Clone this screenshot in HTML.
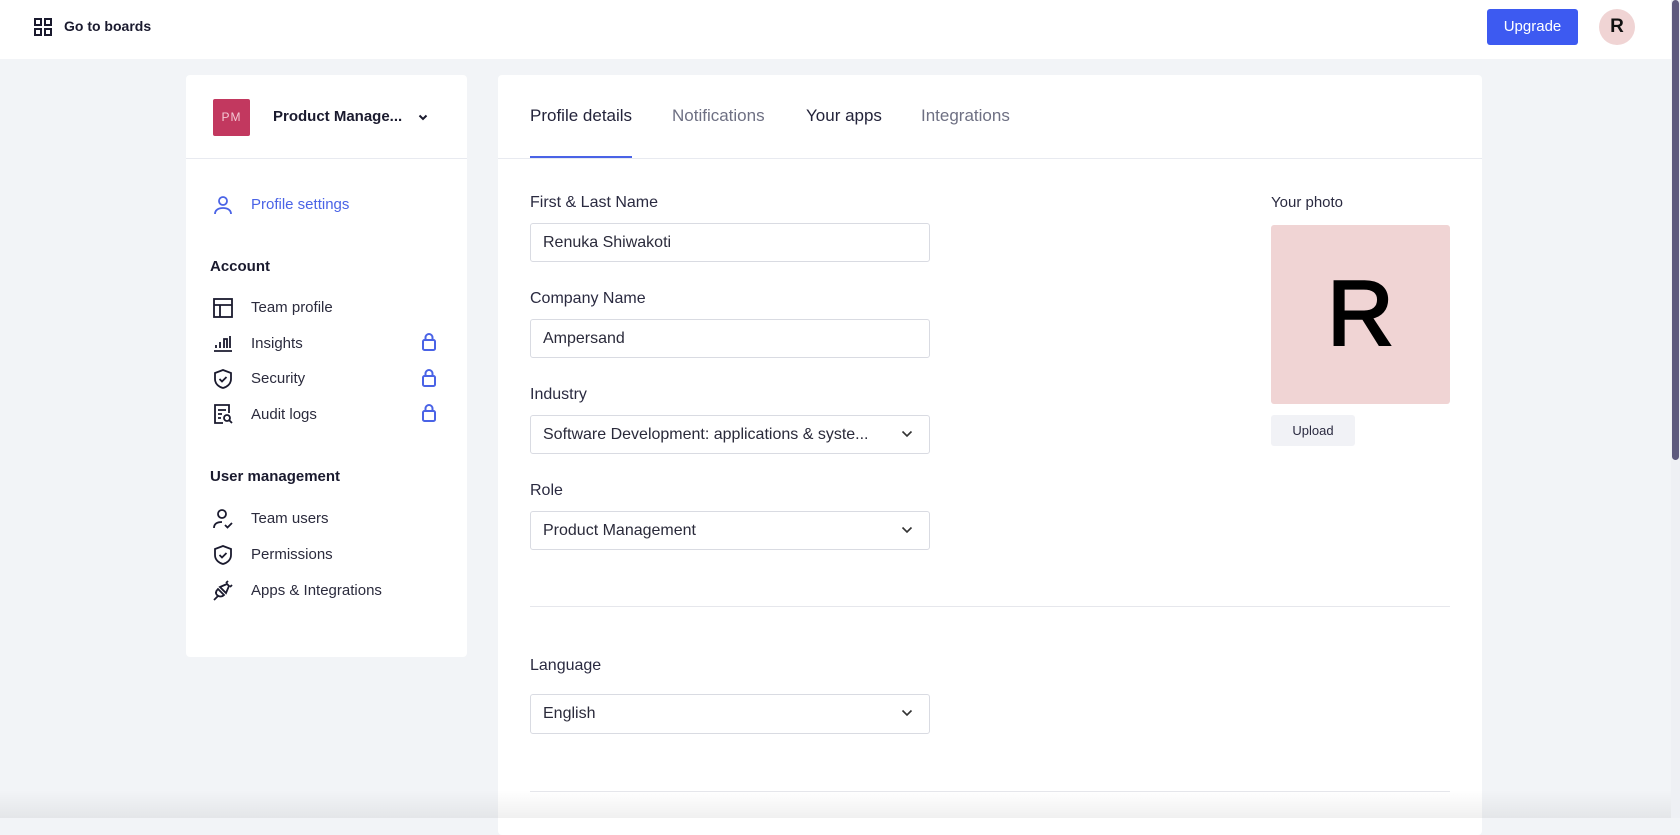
<!DOCTYPE html>
<html><head><meta charset="utf-8"><style>
*{box-sizing:border-box;margin:0;padding:0}
body{width:1680px;height:818px;overflow:hidden;background:#f2f4f7;font-family:"Liberation Sans",sans-serif;color:#23233a;position:relative}
.top{position:absolute;left:0;top:0;width:1671px;height:59px;background:#fff}
.abs{position:absolute}
.card{position:absolute;background:#fff;border-radius:4px}
.nav{position:absolute;left:251px;font-size:15px;color:#2b2b3d}
.ico{position:absolute;left:212px}
.lbl{position:absolute;left:530px;font-size:16px;color:#2a2a40}
.inp{position:absolute;left:530px;width:400px;height:39px;border:1px solid #d9dbe2;border-radius:3px;font-size:16px;padding:0 12px;line-height:37px;color:#2a2a3a;background:#fff}
.chev{position:absolute;right:16px;top:14px}
.hr{position:absolute;left:530px;width:920px;height:1px;background:#e6e7ec}
.lock{position:absolute;left:421px}
</style></head><body>
<div class="top">
<svg class="abs" style="left:34px;top:18px" width="18" height="18" viewBox="0 0 18 18" fill="none" stroke="#1a1a2e" stroke-width="2"><rect x="1" y="1" width="6" height="6"/><rect x="11" y="1" width="6" height="6"/><rect x="1" y="11" width="6" height="6"/><rect x="11" y="11" width="6" height="6"/></svg>
<div class="abs" style="left:64px;top:18px;font-size:14px;font-weight:bold;color:#1a1a2e">Go to boards</div>
<div class="abs" style="left:1487px;top:9px;width:91px;height:36px;background:#3d5af1;border-radius:3px;color:#fff;font-size:15px;text-align:center;line-height:36px">Upgrade</div>
<div class="abs" style="left:1599px;top:9px;width:36px;height:36px;border-radius:50%;background:#f0d4d4;color:#111;font-size:19px;font-weight:bold;text-align:center;line-height:36px">R</div>
</div>
<div class="abs" style="left:1671px;top:0;width:9px;height:818px;background:#eef0f4"></div>
<div class="abs" style="left:1672px;top:0;width:7px;height:460px;background:#5e5a7e;border-radius:4px"></div>

<div class="card" style="left:186px;top:75px;width:281px;height:582px">
<div class="abs" style="left:0;top:83px;width:281px;height:1px;background:#e8eaf0"></div>
</div>
<div class="abs" style="left:213px;top:99px;width:37px;height:37px;background:#c2385f;border-radius:2px;color:#f4c8d4;font-size:12px;text-align:center;line-height:37px;letter-spacing:1px">PM</div>
<div class="abs" style="left:273px;top:108px;font-size:15px;font-weight:bold;color:#1a1a2e">Product Manage...</div>
<svg class="abs" style="left:418px;top:114px" width="10" height="7" viewBox="0 0 10 7"><path d="M1.5 1.5 5 5 8.5 1.5" fill="none" stroke="#1a1a2e" stroke-width="2"/></svg>

<svg class="ico" style="top:194px" width="22" height="22" viewBox="0 0 22 22" fill="none" stroke="#4a63e6" stroke-width="1.8"><circle cx="11" cy="7" r="4"/><path d="M3 20c0-4 3.5-6 8-6s8 2 8 6"/></svg>
<div class="nav" style="top:196px;color:#4a63e6">Profile settings</div>
<div class="abs" style="left:210px;top:258px;font-size:15px;font-weight:bold;color:#1a1a2e">Account</div>

<svg class="ico" style="top:297px" width="22" height="22" viewBox="0 0 22 22" fill="none" stroke="#1a1a2e" stroke-width="1.8"><rect x="2" y="2" width="18" height="18"/><path d="M2 8h18M8 8v12"/></svg>
<div class="nav" style="top:299px">Team profile</div>
<svg class="ico" style="top:332px" width="22" height="22" viewBox="0 0 22 22" fill="none" stroke="#1a1a2e" stroke-width="1.8"><path d="M2 19h18M4 16v-3M8 16v-6M12 16V7h3v9M18 16V4"/></svg>
<div class="nav" style="top:335px">Insights</div>
<svg class="ico" style="top:368px" width="22" height="22" viewBox="0 0 22 22" fill="none" stroke="#1a1a2e" stroke-width="1.8"><path d="M11 2l8 3v6c0 5-4 8-8 9-4-1-8-4-8-9V5z"/><path d="M7.5 11l2.5 2.5 4.5-4.5"/></svg>
<div class="nav" style="top:370px">Security</div>
<svg class="ico" style="top:403px" width="22" height="22" viewBox="0 0 22 22" fill="none" stroke="#1a1a2e" stroke-width="1.8"><path d="M11 20H3V2h14v8"/><path d="M6 7h8M6 11h4M6 15h3"/><circle cx="15" cy="15" r="3"/><path d="M17 17l3 3"/></svg>
<div class="nav" style="top:406px">Audit logs</div>
<svg class="lock" style="top:332px" width="16" height="19" viewBox="0 0 16 19" fill="none" stroke="#4a63e6" stroke-width="2"><rect x="2" y="8" width="12" height="10" rx="1.5"/><path d="M4.5 8V5.5a3.5 3.5 0 017 0V8"/></svg>
<svg class="lock" style="top:368px" width="16" height="19" viewBox="0 0 16 19" fill="none" stroke="#4a63e6" stroke-width="2"><rect x="2" y="8" width="12" height="10" rx="1.5"/><path d="M4.5 8V5.5a3.5 3.5 0 017 0V8"/></svg>
<svg class="lock" style="top:403px" width="16" height="19" viewBox="0 0 16 19" fill="none" stroke="#4a63e6" stroke-width="2"><rect x="2" y="8" width="12" height="10" rx="1.5"/><path d="M4.5 8V5.5a3.5 3.5 0 017 0V8"/></svg>

<div class="abs" style="left:210px;top:468px;font-size:15px;font-weight:bold;color:#1a1a2e">User management</div>
<svg class="ico" style="top:508px" width="22" height="22" viewBox="0 0 22 22" fill="none" stroke="#1a1a2e" stroke-width="1.8"><circle cx="10" cy="6" r="4"/><path d="M2 20c0-4 3-6 8-6M13 17l2.5 2.5L20 15"/></svg>
<div class="nav" style="top:510px">Team users</div>
<svg class="ico" style="top:544px" width="22" height="22" viewBox="0 0 22 22" fill="none" stroke="#1a1a2e" stroke-width="1.8"><path d="M11 2l8 3v6c0 5-4 8-8 9-4-1-8-4-8-9V5z"/><path d="M7.5 11l2.5 2.5 4.5-4.5"/></svg>
<div class="nav" style="top:546px">Permissions</div>
<svg class="ico" style="top:579px" width="22" height="22" viewBox="0 0 22 22" fill="none" stroke="#1a1a2e" stroke-width="1.8"><path d="M2 21l4-4"/><path d="M6 10l6 6c-2 2-5 2-7 0s-1-4 1-6z"/><path d="M8 8l7-3 2 2-3 7z"/><path d="M14 4l2-2M18 8l2-2"/></svg>
<div class="nav" style="top:582px">Apps &amp; Integrations</div>

<div class="card" style="left:498px;top:75px;width:984px;height:760px">
<div class="abs" style="left:0;top:83px;width:984px;height:1px;background:#e8eaf0"></div>
<div class="abs" style="left:32px;top:81px;width:102px;height:2px;background:#4a63e6"></div>
</div>
<div class="abs" style="left:530px;top:106px;font-size:17px;color:#23233a">Profile details</div>
<div class="abs" style="left:672px;top:106px;font-size:17px;color:#6e7083">Notifications</div>
<div class="abs" style="left:806px;top:106px;font-size:17px;color:#23233a">Your apps</div>
<div class="abs" style="left:921px;top:106px;font-size:17px;color:#6e7083">Integrations</div>

<div class="lbl" style="top:194px">First &amp; Last Name</div>
<div class="inp" style="top:223px">Renuka Shiwakoti</div>
<div class="lbl" style="top:290px">Company Name</div>
<div class="inp" style="top:319px">Ampersand</div>
<div class="lbl" style="top:386px">Industry</div>
<div class="inp" style="top:415px">Software Development: applications &amp; syste...<svg class="chev" width="12" height="8" viewBox="0 0 12 8"><path d="M1.5 1.5 6 6l4.5-4.5" fill="none" stroke="#333" stroke-width="1.6"/></svg></div>
<div class="lbl" style="top:482px">Role</div>
<div class="inp" style="top:511px">Product Management<svg class="chev" width="12" height="8" viewBox="0 0 12 8"><path d="M1.5 1.5 6 6l4.5-4.5" fill="none" stroke="#333" stroke-width="1.6"/></svg></div>
<div class="hr" style="top:606px"></div>
<div class="lbl" style="top:657px">Language</div>
<div class="inp" style="top:694px;height:40px">English<svg class="chev" width="12" height="8" viewBox="0 0 12 8"><path d="M1.5 1.5 6 6l4.5-4.5" fill="none" stroke="#333" stroke-width="1.6"/></svg></div>
<div class="hr" style="top:791px"></div>

<div class="abs" style="left:1271px;top:194px;font-size:15px;color:#2a2a40">Your photo</div>
<div class="abs" style="left:1271px;top:225px;width:179px;height:179px;background:#f0d4d4;border-radius:3px;color:#000;font-size:92px;text-align:center;line-height:179px;-webkit-text-stroke:2.5px #000">R</div>
<div class="abs" style="left:1271px;top:415px;width:84px;height:31px;background:#f1f2f6;border-radius:3px;font-size:13px;text-align:center;line-height:31px;color:#2a2a40">Upload</div>
<div class="abs" style="left:0;top:790px;width:1671px;height:28px;background:linear-gradient(rgba(0,0,0,0),rgba(0,0,0,0.06))"></div>
</body></html>
